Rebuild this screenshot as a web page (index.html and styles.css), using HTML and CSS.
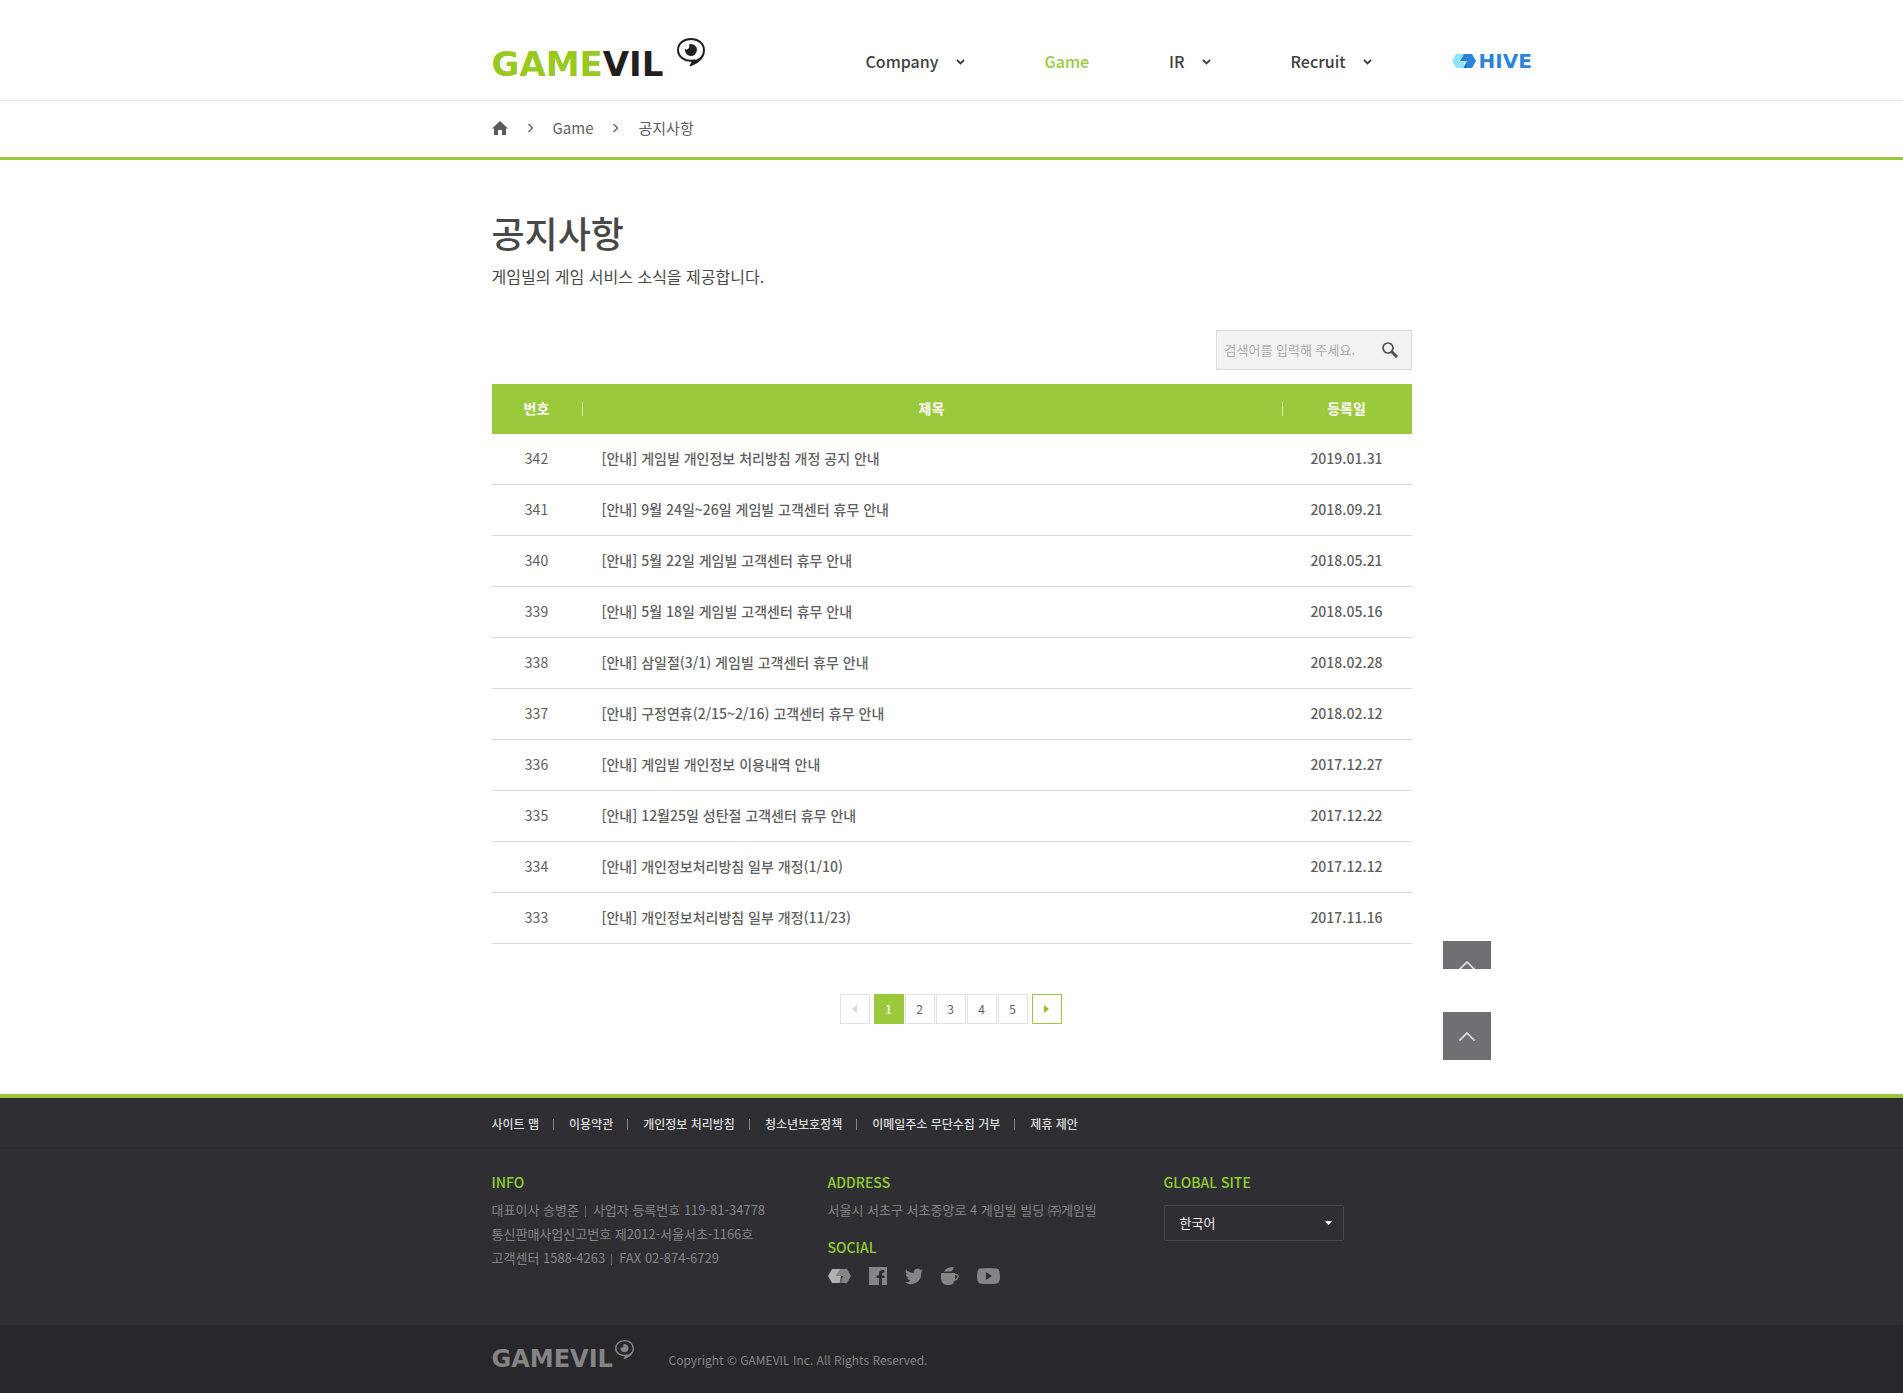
FILE: index.html
```html
<!DOCTYPE html>
<html lang="ko">
<head>
<meta charset="utf-8">
<meta name="viewport" content="width=device-width, initial-scale=1">
<title>공지사항 - GAMEVIL</title>
<link rel="stylesheet" href="styles.css">
</head>
<body>
<svg class="defs" aria-hidden="true">
  <symbol id="eye" viewBox="0 0 28 28">
    <path fill="none" stroke="currentColor" stroke-width="2" d="M14 1C21 1 27 5.500 27 12C27 17 24.500 21 20 24L14 27L16.500 22.500C8 24 1 19 1 12C1 5.500 7 1 14 1Z"/>
    <path fill="currentColor" d="M16 22.500C21 21.500 25 18.500 26.500 14.500C26 21 21 26 13 28C16 25.500 16.500 24 16 22.500Z"/>
    <path fill="currentColor" d="M13.500 6A6 6 0 1 1 8 11C9.500 12.500 13.500 10.500 12 6.500Z"/>
  </symbol>
  <symbol id="down" viewBox="0 0 9 6"><path fill="none" stroke="currentColor" stroke-width="1.800" d="M1 1L4.500 4.500L8 1"/></symbol>
  <symbol id="right" viewBox="0 0 5 10"><path fill="none" stroke="currentColor" stroke-width="1.300" d="M.5 1L4.500 5L.5 9"/></symbol>
  <symbol id="up" viewBox="0 0 16 9"><path fill="none" stroke="currentColor" stroke-width="1.400" d="M.5 8.500L8 1L15.500 8.500"/></symbol>
</svg>

<header class="header">
  <div class="wrap header-row">
    <a class="logo" href="#"><span class="logo-game">GAME</span>VIL<svg class="logo-eye" aria-hidden="true"><use href="#eye"/></svg></a>
    <nav class="gnb">
      <a href="#">Company<svg class="down" aria-hidden="true"><use href="#down"/></svg></a>
      <a class="current" href="#">Game</a>
      <a href="#">IR<svg class="down" aria-hidden="true"><use href="#down"/></svg></a>
      <a href="#">Recruit<svg class="down" aria-hidden="true"><use href="#down"/></svg></a>
      <a class="hive" href="#"><svg width="24" height="14" viewBox="0 0 24 14" aria-hidden="true"><path fill="#8fe5ff" d="M4 0H12L8 7H13L12 14H4L0 7Z"/><path fill="#2a84dc" d="M12 0H20L24 7L20 14H12L15 7H8Z"/><path fill="#1b64ad" d="M15 7L14 14H11.500Z"/></svg>HIVE</a>
    </nav>
  </div>
</header>

<nav class="crumbs">
  <div class="wrap crumbs-row">
    <a href="#" aria-label="Home"><svg width="16" height="14" viewBox="0 0 16 14" aria-hidden="true"><path fill="#5a5a5a" d="M8 0L16 7.500H14V14H10V9H6V14H2V7.500H0Z"/></svg></a>
    <svg class="right" aria-hidden="true"><use href="#right"/></svg>
    <a href="#">Game</a>
    <svg class="right" aria-hidden="true"><use href="#right"/></svg>
    <a href="#">공지사항</a>
  </div>
</nav>

<main class="wrap main">
  <h1>공지사항</h1>
  <p class="lead">게임빌의 게임 서비스 소식을 제공합니다.</p>
  <form class="search">
    <input type="text" aria-label="검색어" placeholder="검색어를 입력해 주세요.">
    <button type="button" aria-label="검색"><svg width="16" height="16" viewBox="0 0 16 16" aria-hidden="true"><circle cx="6" cy="6" r="5" fill="none" stroke="#505050" stroke-width="1.700"/><path stroke="#505050" stroke-width="3" d="M9.500 9.500L15 15"/></svg></button>
  </form>
  <table class="board">
    <colgroup><col class="col-no"><col><col class="col-date"></colgroup>
    <thead><tr><th scope="col">번호</th><th scope="col">제목</th><th scope="col">등록일</th></tr></thead>
    <tbody>
      <tr><td>342</td><td><a href="#">[안내] 게임빌 개인정보 처리방침 개정 공지 안내</a></td><td>2019.01.31</td></tr>
      <tr><td>341</td><td><a href="#">[안내] 9월 24일~26일 게임빌 고객센터 휴무 안내</a></td><td>2018.09.21</td></tr>
      <tr><td>340</td><td><a href="#">[안내] 5월 22일 게임빌 고객센터 휴무 안내</a></td><td>2018.05.21</td></tr>
      <tr><td>339</td><td><a href="#">[안내] 5월 18일 게임빌 고객센터 휴무 안내</a></td><td>2018.05.16</td></tr>
      <tr><td>338</td><td><a href="#">[안내] 삼일절(3/1) 게임빌 고객센터 휴무 안내</a></td><td>2018.02.28</td></tr>
      <tr><td>337</td><td><a href="#">[안내] 구정연휴(2/15~2/16) 고객센터 휴무 안내</a></td><td>2018.02.12</td></tr>
      <tr><td>336</td><td><a href="#">[안내] 게임빌 개인정보 이용내역 안내</a></td><td>2017.12.27</td></tr>
      <tr><td>335</td><td><a href="#">[안내] 12월25일 성탄절 고객센터 휴무 안내</a></td><td>2017.12.22</td></tr>
      <tr><td>334</td><td><a href="#">[안내] 개인정보처리방침 일부 개정(1/10)</a></td><td>2017.12.12</td></tr>
      <tr><td>333</td><td><a href="#">[안내] 개인정보처리방침 일부 개정(11/23)</a></td><td>2017.11.16</td></tr>
    </tbody>
  </table>
  <nav class="pages" aria-label="페이지">
    <a class="prev" href="#" aria-label="이전"><svg width="5" height="8" viewBox="0 0 5 8" aria-hidden="true"><path fill="currentColor" d="M5 0V8L0 4Z"/></svg></a>
    <a class="on" href="#">1</a>
    <a href="#">2</a>
    <a href="#">3</a>
    <a href="#">4</a>
    <a href="#">5</a>
    <a class="next" href="#" aria-label="다음"><svg width="5" height="8" viewBox="0 0 5 8" aria-hidden="true"><path fill="currentColor" d="M0 0V8L5 4Z"/></svg></a>
  </nav>
  <div class="tops">
    <a class="top top-cut" href="#" aria-label="맨 위로"><svg aria-hidden="true"><use href="#up"/></svg></a>
    <a class="top" href="#" aria-label="맨 위로"><svg aria-hidden="true"><use href="#up"/></svg></a>
  </div>
</main>

<footer class="footer">
  <div class="links">
    <ul class="wrap">
      <li><a href="#">사이트 맵</a></li>
      <li><a href="#">이용약관</a></li>
      <li><a href="#">개인정보 처리방침</a></li>
      <li><a href="#">청소년보호정책</a></li>
      <li><a href="#">이메일주소 무단수집 거부</a></li>
      <li><a href="#">제휴 제안</a></li>
    </ul>
  </div>
  <div class="wrap info">
    <section>
      <h2>INFO</h2>
      <p>대표이사 송병준<i class="bar"></i>사업자 등록번호 119-81-34778</p>
      <p>통신판매사업신고번호 제2012-서울서초-1166호</p>
      <p>고객센터 1588-4263<i class="bar"></i>FAX 02-874-6729</p>
    </section>
    <section>
      <h2>ADDRESS</h2>
      <p>서울시 서초구 서초중앙로 4 게임빌 빌딩 ㈜게임빌</p>
      <h2 class="social-title">SOCIAL</h2>
      <div class="social">
        <a href="#" aria-label="HIVE"><svg width="23" height="14" viewBox="0 0 23 14" aria-hidden="true"><path fill="#b0b0b0" d="M4 0H13L8 7H13L12 14H4L0 7Z"/><path fill="#858585" d="M12 0H19L23 7L19 14H12L15 7H8Z"/><path fill="#6c6c6c" d="M15 7L14 14H11.500Z"/></svg></a>
        <a href="#" aria-label="Facebook"><svg width="18" height="18" viewBox="0 0 18 18" aria-hidden="true"><path fill="#858585" d="M0 0H18V18H13V11H15.500V8.500H13V7Q13 5.500 14.500 5.500H15.500V3H13.500Q10 3 10 6.500V8.500H7.500V11H10V18H0Z"/></svg></a>
        <a href="#" aria-label="Twitter"><svg width="18" height="18" viewBox="0 2 24 20" aria-hidden="true"><path fill="#858585" d="M24 4.600a10 10 0 0 1-2.800.8 5 5 0 0 0 2.100-2.700 10 10 0 0 1-3.100 1.200A4.900 4.900 0 0 0 11.800 8.400 14 14 0 0 1 1.700 3.200a4.900 4.900 0 0 0 1.500 6.600 4.900 4.900 0 0 1-2.200-.6 4.900 4.900 0 0 0 3.900 4.900 5 5 0 0 1-2.200.1 4.900 4.900 0 0 0 4.600 3.400A9.900 9.900 0 0 1 0 20.500 14 14 0 0 0 21.500 7.100 10 10 0 0 0 24 4.600Z"/></svg></a>
        <a href="#" aria-label="Cafe"><svg width="18" height="18" viewBox="0 0 18 18" aria-hidden="true"><path fill="#858585" d="M0 6H14V12Q13 17.500 9 18H5Q1 17 0 12Z"/><path fill="#858585" d="M3 4.500Q5 0 13 0Q11 4.500 9 4.500Z"/><path fill="none" stroke="#858585" stroke-width="1.500" d="M13.500 7.500Q17.500 7 17 10Q16.500 13 12.500 13"/></svg></a>
        <a href="#" aria-label="YouTube"><svg width="23" height="16" viewBox="0 0 23 16" aria-hidden="true"><path fill="#858585" fill-rule="evenodd" d="M3 .5Q11.500-.5 20 .5Q23 1 23 8T20 15.500Q11.500 16.500 3 15.500Q0 15 0 8T3 .5ZM9 4V12L15 8Z"/></svg></a>
      </div>
    </section>
    <section>
      <h2><label for="site">GLOBAL SITE</label></h2>
      <div class="select">
        <select id="site"><option>한국어</option></select>
        <svg width="7" height="4" viewBox="0 0 7 4" aria-hidden="true"><path fill="#fff" d="M0 0H7L3.500 4Z"/></svg>
      </div>
    </section>
  </div>
  <div class="copy">
    <div class="wrap copy-row">
      <a class="logo logo-small" href="#">GAMEVIL<svg class="logo-eye" aria-hidden="true"><use href="#eye"/></svg></a>
      <small>Copyright © GAMEVIL Inc. All Rights Reserved.</small>
    </div>
  </div>
</footer>
</body>
</html>
```
FILE: styles.css
```css
* { box-sizing: border-box; margin: 0; padding: 0; }
body {
  background: #fff;
  color: #606060;
  font: 14px/24px "Noto Sans CJK KR", "Noto Sans", sans-serif;
}
a { color: inherit; text-decoration: none; }
svg { display: block; flex: none; }
ul { list-style: none; }
.defs { position: absolute; width: 0; height: 0; }
.wrap { width: 100%; max-width: 920px; margin: 0 auto; }

/* header */
.header { border-bottom: 1px solid #e5e5e5; }
.header-row { display: flex; height: 100px; }
.logo {
  position: relative;
  flex: none;
  width: 213px;
  padding-top: 44px;
  color: #231f20;
  font: bold 34px/40px "DejaVu Sans", sans-serif;
}
.logo-game { color: #98c91e; }
.logo-eye { position: absolute; top: 38px; right: 0; width: 28px; height: 28px; }
.gnb {
  display: flex;
  align-items: center;
  gap: 80px;
  margin-left: 161px;
  padding-top: 22px;
  color: #404040;
  font-size: 16px;
  font-weight: 500;
  white-space: nowrap;
}
.gnb a { display: flex; align-items: center; gap: 17px; }
.gnb .current { color: #9aca3c; }
.gnb .hive { gap: 3px; color: #2a84dc; font: bold 20px/24px "DejaVu Sans", sans-serif; }
.down { width: 9px; height: 6px; margin-top: 2px; }

/* breadcrumb */
.crumbs { border-bottom: 3px solid #9aca3c; font-size: 15px; }
.crumbs-row { display: flex; align-items: center; gap: 20px; height: 56px; padding-bottom: 2px; }
.right { width: 5px; height: 10px; }

/* notice board */
.main { position: relative; padding: 46px 0 70px; }
h1 { color: #484848; font-size: 36px; line-height: 52px; font-weight: 500; }
.lead { margin-top: 6px; color: #484848; font-size: 16px; }
.search {
  display: flex;
  width: 196px;
  height: 40px;
  margin: 42px 0 14px auto;
  border: 1px solid #dadada;
  background: #f2f2f2;
}
.search input {
  flex: 1;
  min-width: 0;
  padding-left: 8px;
  border: 0;
  background: none;
  font: inherit;
  font-size: 13px;
}
.search input::placeholder { color: #aaa; }
.search button { padding: 0 13px; border: 0; background: none; }
.board { width: 100%; border-collapse: separate; border-spacing: 0; table-layout: fixed; text-align: center; }
.board th, .board td { padding-bottom: 2px; }
.col-no { width: 90px; }
.col-date { width: 130px; }
.board th { height: 50px; background: #9aca3c; color: #fff; font-weight: 700; }
.board th + th {
  background: linear-gradient(#d5e9ad, #d5e9ad) 0 18px / 1px 14px no-repeat #9aca3c;
}
.board td { height: 51px; border-bottom: 1px solid #dadada; font-weight: 500; }
.board td:first-child { font-weight: 400; }
.board td:nth-child(2) { padding-left: 20px; text-align: left; }
.pages { display: flex; justify-content: center; gap: 1px; margin-top: 50px; padding-right: 2px; font-size: 12px; }
.pages a {
  display: flex;
  align-items: center;
  justify-content: center;
  width: 30px;
  height: 30px;
  border: 1px solid #e2e2e2;
}
.pages .on { border-color: #9aca3c; background: #9aca3c; color: #fff; font-weight: 500; }
.pages .prev { margin-right: 3px; color: #d8d8d8; }
.pages .next { margin-left: 3px; border-color: #9aca3c; color: #8fc31f; }
.tops { position: absolute; bottom: 34px; left: 100%; display: grid; gap: 43px; margin-left: 31px; }
.top { width: 48px; height: 48px; padding: 20px 16px; background: #706f74; color: #fff; }
.top svg { width: 16px; height: 9px; }
.top-cut { height: 28px; padding-bottom: 0; overflow: hidden; }

/* footer */
.footer { border-top: 4px solid #9aca3c; background: #2f2e33; color: #858585; }
.links { border-bottom: 1px solid #353439; color: #ddd; font-size: 12px; font-weight: 500; }
.links ul { display: flex; align-items: center; height: 52px; }
.links li { display: flex; align-items: center; }
.links li + li::before { content: ""; width: 1px; height: 11px; margin: 0 15px 0 14px; background: #858585; }
.info { display: grid; grid-template-columns: 336px 336px 1fr; padding: 19px 0 39px; font-size: 13px; }
.info h2 { margin-bottom: 4px; color: #8fcf2f; font-size: 14px; line-height: 24px; font-weight: 500; }
.bar { display: inline-block; width: 1px; height: 11px; margin: 0 7px 0 6px; background: #666; vertical-align: -2px; }
.info .social-title { margin: 13px 0 7px; }
.social { display: flex; align-items: center; gap: 18px; height: 20px; }
.select { position: relative; width: 180px; margin-top: 11px; }
.select select {
  width: 100%;
  height: 36px;
  padding: 0 15px;
  border: 1px solid #47464b;
  border-radius: 2px;
  appearance: none;
  background: none;
  color: #eee;
  font: inherit;
}
.select svg { position: absolute; top: 16px; right: 12px; }
.copy { background: #28272b; }
.copy-row { display: flex; align-items: center; height: 69px; }
.logo-small { width: 142px; height: 69px; padding-top: 22px; color: #858585; font-size: 24px; line-height: 24px; }
.logo-small .logo-eye { top: 15px; width: 19px; height: 19px; }
.copy small { margin-left: 35px; font-size: 12px; }
```
